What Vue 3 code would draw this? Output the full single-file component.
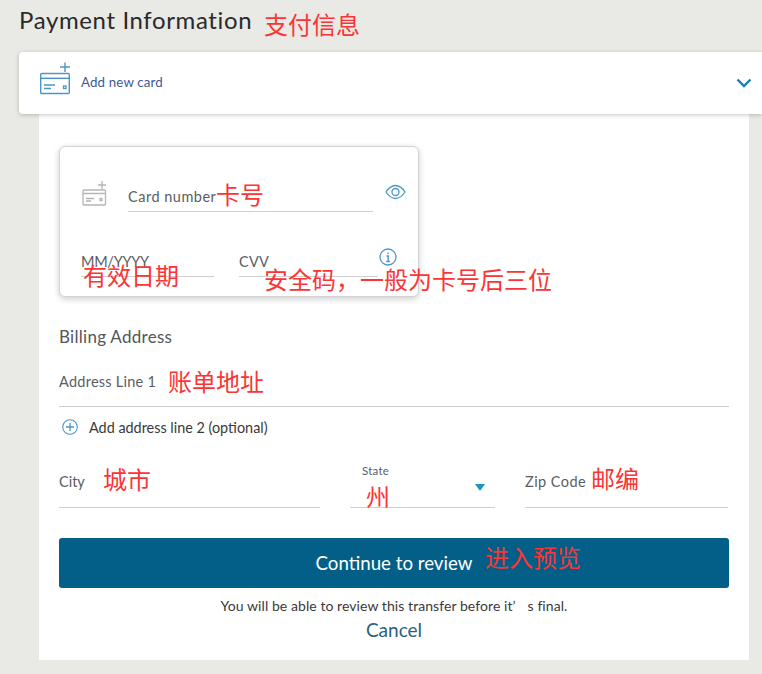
<script setup>
const notes = [
  { text: '支付信息', cls: 'n1' },
  { text: '卡号', cls: 'n2' },
  { text: '有效日期', cls: 'n3' },
  { text: '安全码，一般为卡号后三位', cls: 'n4' },
  { text: '账单地址', cls: 'n5' },
  { text: '城市', cls: 'n6' },
  { text: '州', cls: 'n7' },
  { text: '邮编', cls: 'n8' },
  { text: '进入预览', cls: 'n9' }
]
</script>

<template>
  <div class="page">
    <h1 class="title">Payment Information</h1>
    <div class="addbar">
      <svg class="addicon" width="32" height="34" viewBox="0 0 32 34" fill="none" stroke="#4d96c4" stroke-width="1.4">
        <path d="M26 0.500v9.500M21 5h10" />
        <rect x="1.700" y="11.500" width="28.600" height="20" rx="1" />
        <path d="M1.700 16.300h28.600" />
        <path d="M5 23h11M5 26.500h7" stroke-width="1.500" />
        <rect x="24.500" y="24" width="2.500" height="2.500" stroke-width="1.300" />
      </svg>
      <span class="addtext">Add new card</span>
      <svg class="chev" width="16" height="10" viewBox="0 0 16 10" fill="none" stroke="#1b7fae" stroke-width="2.400">
        <path d="M1.500 1.500 8 8l6.500-6.500" />
      </svg>
    </div>
    <div class="panel">
      <div class="card">
        <div class="row1">
          <svg class="cardicon" width="25" height="26" viewBox="0 0 25 26" fill="none" stroke="#b5b5b5" stroke-width="1.300">
            <path d="M20 1v8M16 5h8" />
            <rect x="1" y="10" width="22.500" height="15" rx="1" />
            <path d="M1 13.500h22.500" stroke-width="1.500" />
            <path d="M4 18.500h8M4 21h5" />
            <rect x="18" y="18.500" width="2" height="2" />
          </svg>
          <div class="field cardnum">Card number</div>
          <svg class="eye" width="21" height="16" viewBox="0 0 21 16" fill="none" stroke="#4d96c4" stroke-width="1.300">
            <path d="M1 8C4 3.500 7 1.500 10.500 1.500S17 3.500 20 8C17 12.500 14 14.500 10.500 14.500S4 12.500 1 8Z" />
            <circle cx="10.500" cy="8" r="3.500" />
          </svg>
        </div>
        <div class="row2">
          <div class="field exp">MM/YYYY</div>
          <div class="field cvv">CVV</div>
          <svg class="info" width="18" height="18" viewBox="0 0 18 18" fill="none" stroke="#4d96c4" stroke-width="1.300">
            <circle cx="9" cy="9" r="8" />
            <path d="M9 4.500v1.600M7.500 8h1.700v5.500M7.300 13.500h3.600" stroke-width="1.400" />
          </svg>
        </div>
      </div>

      <div class="billing">Billing Address</div>
      <div class="field line1">Address Line 1</div>
      <div class="addline">
        <svg width="16" height="16" viewBox="0 0 16 16" fill="none" stroke="#4d96c4" stroke-width="1.100">
          <circle cx="8" cy="8" r="7.300" />
          <path d="M8 4v8M4 8h8" stroke-width="1.300" />
        </svg>
        <span>Add address line 2 (optional)</span>
      </div>
      <div class="cityrow">
        <div class="field city">City</div>
        <div class="field state">
          <span class="statelabel">State</span>
          <span class="caret"></span>
        </div>
        <div class="field zip">Zip Code</div>
      </div>
      <button class="cta" type="button">Continue to review</button>
      <p class="hint">You will be able to review this transfer before it<span class="quote">’</span>s final.</p>
      <div class="cancel">Cancel</div>
    </div>
    <span v-for="n in notes" :key="n.cls" class="note" :class="n.cls">{{ n.text }}</span>
  </div>
</template>

<style scoped>
.page {
  position: relative;
  width: 762px;
  height: 674px;
  overflow: hidden;
  background: #e9e9e5;
  font-family: Lato, "Noto Sans", sans-serif;
  color: #53565a;
}
.title {
  margin: 0;
  height: 52px;
  padding: 5px 0 0 19px;
  box-sizing: border-box;
  font-size: 24px;
  line-height: 30px;
  font-weight: 400;
  letter-spacing: 0.62px;
  color: #2a2a2a;
}
.addbar {
  position: relative;
  z-index: 1;
  display: flex;
  align-items: center;
  height: 62px;
  margin-left: 19px;
  padding: 0 10px 0 20px;
  background: #fff;
  border-radius: 4px 0 0 4px;
  box-shadow: 0 1px 4px rgba(0, 0, 0, 0.22);
}
.addicon { align-self: flex-start; margin: 10px 10px 0 0; }
.addtext { font-size: 13.300px; line-height: 16px; margin-top: -3px; color: #3d5a94; letter-spacing: 0.15px; }
.chev { margin-left: auto; }
.panel {
  width: 710px;
  height: 546px;
  margin-left: 39px;
  padding: 32px 20px 0;
  box-sizing: border-box;
  background: #fff;
}
.card {
  width: 360px;
  height: 151px;
  box-sizing: border-box;
  background: #fff;
  border: 1px solid #d3d3d3;
  border-radius: 6px;
  box-shadow: 0 2px 6px rgba(0, 0, 0, 0.2);
}
.row1 {
  display: flex;
  align-items: flex-start;
  height: 64px;
  box-sizing: content-box;
  padding: 33px 0 0 22px;
}
.field {
  box-sizing: border-box;
  border-bottom: 1px solid #cfcfcf;
  font-size: 14.500px;
  letter-spacing: 0.25px;
  color: #5a5d62;
}
.cardnum {
  width: 245px;
  height: 32px;
  margin-left: 21px;
  padding-top: 8px;
  letter-spacing: 0.5px;
}
.eye { margin: 4px 0 0 12px; }
.row2 {
  display: flex;
  padding: 0 0 0 21px;
}
.exp { width: 133px; height: 33px; padding-top: 9px; letter-spacing: -0.3px; }
.cvv { width: 139px; height: 33px; margin-left: 25px; padding-top: 9px; }
.info { margin: 4px 0 0 1px; }
.billing {
  margin-top: 30px;
  font-size: 17px;
  letter-spacing: 0.28px;
  line-height: 20px;
  color: #53565a;
}
.line1 {
  height: 60px;
  padding-top: 25px;
  line-height: 20px;
}
.addline {
  display: flex;
  align-items: center;
  gap: 11px;
  height: 40px;
  padding: 0 0 0 3px;
  font-size: 14.400px;
  color: #3a3a3a;
}
.cityrow {
  display: flex;
  margin-top: 11px;
}
.city { width: 261px; height: 50px; padding-top: 14px; line-height: 20px; letter-spacing: 0; }
.state { position: relative; width: 145px; height: 50px; margin-left: 30px; }
.statelabel {
  position: absolute;
  left: 12px;
  top: 6px;
  font-size: 11.500px;
  line-height: 14px;
}
.caret {
  position: absolute;
  right: 10px;
  top: 26px;
  border-left: 5px solid transparent;
  border-right: 5px solid transparent;
  border-top: 7px solid #1e96b9;
}
.zip { width: 203px; height: 50px; margin-left: 30px; padding-top: 14px; line-height: 20px; letter-spacing: 0.45px; }
.cta {
  display: block;
  width: 100%;
  height: 50px;
  margin-top: 30px;
  border: 0;
  border-radius: 3px;
  background: #035f87;
  color: #fff;
  font-family: inherit;
  font-size: 18.700px;
}
.hint {
  margin: 9px 0 0;
  text-align: center;
  font-size: 14px;
  letter-spacing: 0.07px;
  line-height: 18px;
  color: #3a3a3a;
}
.quote { padding-right: 12px; }
.cancel {
  margin-top: 3px;
  text-align: center;
  font-size: 19px;
  line-height: 24px;
  color: #2a5f80;
}
.note {
  position: absolute;
  z-index: 2;
  font-family: "Noto Sans CJK SC", sans-serif;
  font-size: 24px;
  line-height: 30px;
  color: #fb3535;
  white-space: nowrap;
}
.n1 { left: 264px; top: 9px; }
.n2 { left: 216px; top: 179px; }
.n3 { left: 83px; top: 260px; }
.n4 { left: 264px; top: 264px; }
.n5 { left: 168px; top: 366px; }
.n6 { left: 103px; top: 464px; }
.n7 { left: 366px; top: 481px; }
.n8 { left: 591px; top: 463px; }
.n9 { left: 485px; top: 542px; }
</style>
